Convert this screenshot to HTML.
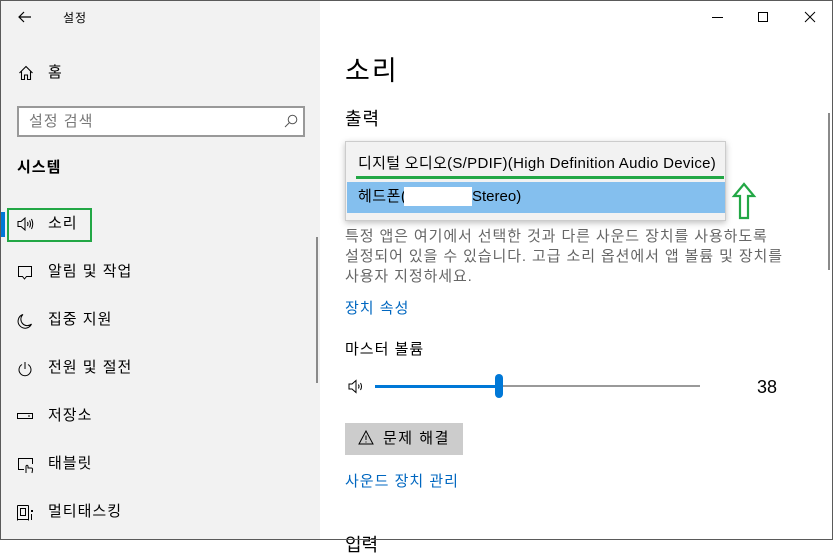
<!DOCTYPE html>
<html><head><meta charset="utf-8"><style>
*{margin:0;padding:0;box-sizing:border-box}
body{width:833px;height:540px;overflow:hidden;background:#fff;font-family:"Liberation Sans","Noto Sans CJK KR",sans-serif;position:relative;color:#000}
.abs{position:absolute;white-space:nowrap}
#side{position:absolute;left:0;top:0;width:320px;height:540px;background:#f2f2f2}
.it{position:absolute;left:48px;font-size:15px;line-height:20px;letter-spacing:1px}
.ic{position:absolute;left:17px}
.blue{color:#0067c0}
</style></head><body>
<div id="side">
  <svg class="abs" style="left:17px;top:9px" width="16" height="16" viewBox="0 0 16 16"><path d="M14 8H2M7 3L2 8l5 5" stroke="#000" fill="none" stroke-width="1.2"/></svg>
  <div class="abs" style="left:63px;top:9px;font-size:12px;letter-spacing:1px">설정</div>
  <svg class="abs" style="left:18px;top:65px" width="16" height="16" viewBox="0 0 16 16"><path d="M1.5 8L8 1.5 14.5 8M3.5 6.5V14.5H6.5V10H9.5V14.5H12.5V6.5" stroke="#000" fill="none" stroke-width="1.1"/></svg>
  <div class="it" style="top:63px">홈</div>
  <div class="abs" style="left:17px;top:106px;width:288px;height:31px;border:2px solid #999;background:#fff"></div>
  <div class="abs" style="left:29px;top:110px;font-size:15px;color:#777;letter-spacing:1px">설정 검색</div>
  <svg class="abs" style="left:283px;top:113px" width="16" height="16" viewBox="0 0 16 16"><circle cx="9.5" cy="6.5" r="4.3" stroke="#555" fill="none"/><path d="M6.5 9.5L2 14" stroke="#555"/></svg>
  <div class="abs" style="left:17px;top:156px;font-size:15px;font-weight:bold;letter-spacing:1px">시스템</div>
  <div class="abs" style="left:1px;top:212px;width:4px;height:25px;background:#0078d7"></div>
  <div class="abs" style="left:7px;top:208px;width:85px;height:34px;border:2px solid #22a745"></div>
  <svg class="ic" style="top:217px" width="18" height="14" viewBox="0 0 18 14"><path d="M1 4.5H4L8 1V13L4 9.5H1Z" stroke="#000" fill="none"/><path d="M10.5 5Q11.5 7 10.5 9M12.5 3.5Q14.5 7 12.5 10.5M14.5 2Q17 7 14.5 12" stroke="#000" fill="none"/></svg>
  <div class="it" style="top:214px">소리</div>
  <svg class="ic" style="top:265px" width="16" height="16" viewBox="0 0 16 16"><path d="M1.5 1.5H14.5V11.5H9.5L7.5 14L5.5 11.5H1.5Z" stroke="#000" fill="none"/></svg>
  <div class="it" style="top:262px">알림 및 작업</div>
  <svg class="ic" style="top:313px" width="16" height="16" viewBox="0 0 16 16"><path d="M6 1.5A7 7 0 1 0 14.5 11 6 6 0 0 1 6 1.5Z" stroke="#000" fill="none"/></svg>
  <div class="it" style="top:310px">집중 지원</div>
  <svg class="ic" style="top:361px" width="16" height="16" viewBox="0 0 16 16"><path d="M5 3.5A6 6 0 1 0 11 3.5M8 1V8" stroke="#000" fill="none"/></svg>
  <div class="it" style="top:358px">전원 및 절전</div>
  <svg class="ic" style="top:411px" width="16" height="10" viewBox="0 0 16 10"><rect x="0.5" y="2.5" width="15" height="5" stroke="#000" fill="none"/><path d="M11 5h2" stroke="#000"/></svg>
  <div class="it" style="top:406px">저장소</div>
  <svg class="ic" style="top:457px" width="18" height="17" viewBox="0 0 18 17"><path d="M7 12.5H1.5V1.5H15.5V7" stroke="#000" fill="none"/><path d="M9 16V9Q10 7.5 11 9V11H14Q16 11 15.5 13L15 16" stroke="#000" fill="none"/></svg>
  <div class="it" style="top:454px">태블릿</div>
  <svg class="ic" style="top:505px" width="17" height="16" viewBox="0 0 17 16"><path d="M0.5 0.5V15.5M0.5 14.5H11.5M11.5 0.5V15.5M0.5 0.5H11.5M3.5 3.5H8.5V10.5H3.5Z" stroke="#000" fill="none"/><rect x="14" y="5" width="2" height="2"/><rect x="14" y="9" width="1" height="6"/></svg>
  <div class="it" style="top:502px">멀티태스킹</div>
  <div class="abs" style="left:316px;top:237px;width:2px;height:146px;background:#8a8a8a"></div>
</div>
<div class="abs" style="left:712px;top:17px;width:11px;height:1px;background:#000"></div>
<div class="abs" style="left:758px;top:12px;width:10px;height:10px;border:1px solid #000"></div>
<svg class="abs" style="left:804px;top:11px" width="12" height="12" viewBox="0 0 12 12"><path d="M1 1L11 11M11 1L1 11" stroke="#000"/></svg>
<div class="abs" style="left:828px;top:113px;width:2px;height:157px;background:#8a8a8a"></div>
<div class="abs" style="left:345px;top:53px;font-size:27px;line-height:36px;letter-spacing:2px">소리</div>
<div class="abs" style="left:345px;top:107px;font-size:18px;line-height:24px;letter-spacing:1px">출력</div>
<div class="abs" style="left:345px;top:227px;font-size:15px;line-height:20px;color:#666;letter-spacing:0.9px">특정 앱은 여기에서 선택한 것과 다른 사운드 장치를 사용하도록<br>설정되어 있을 수 있습니다. 고급 소리 옵션에서 앱 볼륨 및 장치를<br>사용자 지정하세요.</div>
<div class="abs" style="left:345px;top:141px;width:381px;height:80px;background:#f2f2f2;border:1px solid #ccc;box-shadow:0 2px 6px rgba(0,0,0,.25)">
  <div class="abs" style="left:12px;top:12px;font-size:15px;line-height:20px;letter-spacing:.3px">디지털 오디오(S/PDIF)(High Definition Audio Device)</div>
  <div class="abs" style="left:10px;top:34px;width:368px;height:3px;background:#22a745"></div>
  <div class="abs" style="left:1px;top:40px;width:378px;height:31px;background:#84bfee"></div>
  <div class="abs" style="left:12px;top:45px;font-size:15px;line-height:20px;letter-spacing:.5px">헤드폰(</div>
  <div class="abs" style="left:58px;top:45px;width:68px;height:19px;background:#fff"></div>
  <div class="abs" style="left:126px;top:45px;font-size:15px;line-height:20px">Stereo)</div>
</div>
<svg class="abs" style="left:731px;top:182px" width="26" height="38" viewBox="0 0 26 38"><path d="M13 2L23 14H17V36H9V14H3Z" stroke="#22a745" stroke-width="2.2" fill="none"/></svg>
<div class="abs blue" style="left:345px;top:299px;font-size:15px;line-height:20px;letter-spacing:1px">장치 속성</div>
<div class="abs" style="left:345px;top:340px;font-size:15px;line-height:20px;letter-spacing:1px">마스터 볼륨</div>
<svg class="abs" style="left:348px;top:379px" width="20" height="15" viewBox="0 0 20 15"><path d="M1 5H4L8 1.5V13.5L4 10H1Z" stroke="#000" fill="none"/><path d="M10.5 5.5Q11.5 7.5 10.5 9.5M12.5 4Q14.5 7.5 12.5 11" stroke="#000" fill="none"/></svg>
<div class="abs" style="left:375px;top:385px;width:122px;height:3px;background:#0078d7"></div>
<div class="abs" style="left:500px;top:385px;width:200px;height:2px;background:#999"></div>
<div class="abs" style="left:495px;top:374px;width:8px;height:24px;border-radius:4px;background:#0078d7"></div>
<div class="abs" style="left:757px;top:375px;font-size:18px;line-height:24px">38</div>
<div class="abs" style="left:345px;top:423px;width:118px;height:32px;background:#ccc"></div>
<svg class="abs" style="left:358px;top:430px" width="16" height="15" viewBox="0 0 16 15"><path d="M8 1L15 14H1Z" stroke="#000" fill="none"/><path d="M8 5.5V10M8 11.5V12.5" stroke="#000"/></svg>
<div class="abs" style="left:383px;top:429px;font-size:15px;line-height:20px;letter-spacing:1.5px">문제 해결</div>
<div class="abs blue" style="left:345px;top:472px;font-size:15px;line-height:20px;letter-spacing:1px">사운드 장치 관리</div>
<div class="abs" style="left:345px;top:533px;font-size:18px;line-height:24px">입력</div>
<div class="abs" style="left:0;top:0;width:833px;height:540px;border:1px solid #5a5a5a;pointer-events:none"></div>
</body></html>
